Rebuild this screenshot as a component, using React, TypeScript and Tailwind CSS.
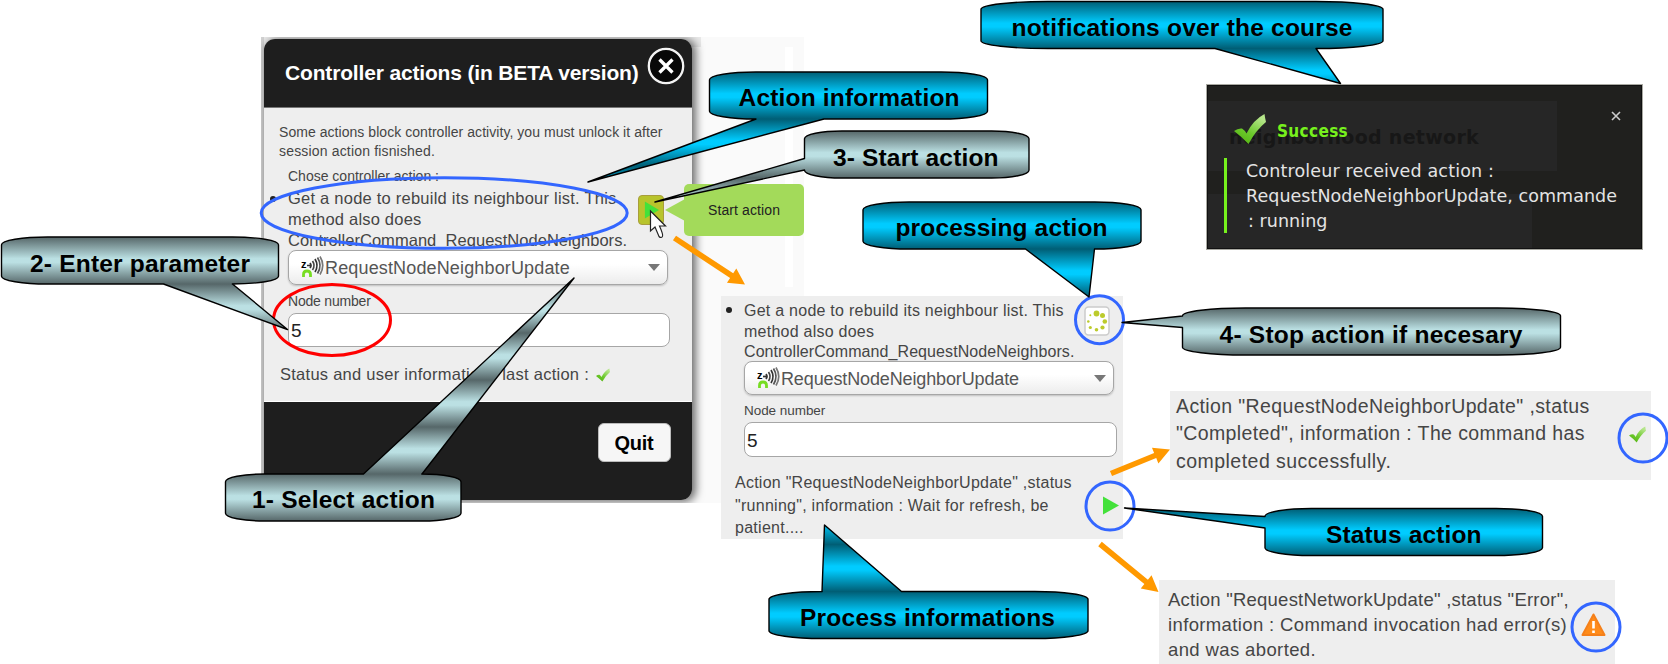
import type { ReactNode } from "react";

type Tone = "cyan" | "slate";
type Side = "top" | "bottom" | "left";

interface CalloutProps {
  id: string;
  tone: Tone;
  x: number;
  y: number;
  w: number;
  side: Side;
  base: [number, number];
  tip: [number, number];
  text: string;
  textX: number;
  textW: number;
  baseline: number;
}

const H = 47;

const tones: Record<Tone, { edge: string; mid: string }> = {
  cyan: { edge: "#005e75", mid: "#00ccff" },
  slate: { edge: "#566769", mid: "#bbe0e3" },
};

function calloutPath({ x, y, w, side, base, tip }: CalloutProps) {
  const rx = w / 6;
  const ry = 7.8;
  const r = x + w;
  const b = y + H;
  const arc = `A${rx} ${ry} 0 0 1`;
  const t = `L${tip[0]} ${tip[1]}`;
  const top = side === "top" ? `H${base[0]}${t}L${base[1]} ${y}` : "";
  const bottom = side === "bottom" ? `H${base[1]}${t}L${base[0]} ${b}` : "";
  const left = side === "left" ? `V${base[1]}${t}L${x} ${base[0]}` : "";
  return `M${x + rx} ${y}${top}H${r - rx}${arc} ${r} ${y + ry}V${b - ry}${arc} ${r - rx} ${b}${bottom}H${x + rx}${arc} ${x} ${b - ry}${left}V${y + ry}${arc} ${x + rx} ${y}Z`;
}

function Callout(props: CalloutProps) {
  const { id, tone, y, text, textX, textW, baseline } = props;
  const { edge, mid } = tones[tone];
  return (
    <g>
      <linearGradient id={id} gradientUnits="userSpaceOnUse" x1="0" y1={y} x2="0" y2={y + H} spreadMethod="repeat">
        <stop offset="0" stopColor={edge} />
        <stop offset="0.46" stopColor={mid} />
        <stop offset="0.54" stopColor={mid} />
        <stop offset="1" stopColor={edge} />
      </linearGradient>
      <path d={calloutPath(props)} fill={`url(#${id})`} stroke="#000" strokeWidth="1.4" strokeLinejoin="round" />
      <text x={textX} y={baseline} textLength={textW} className="fill-black text-[24.5px] font-bold">
        {text}
      </text>
    </g>
  );
}

const callouts: CalloutProps[] = [
  { id: "notif", tone: "cyan", x: 981, y: 1.5, w: 402, side: "bottom", base: [1215, 1316], tip: [1340.5, 83.5], text: "notifications over the course", textX: 1011.5, textW: 341, baseline: 35.5 },
  { id: "info", tone: "cyan", x: 709.5, y: 72, w: 278, side: "bottom", base: [756, 824], tip: [588, 182], text: "Action information", textX: 738.5, textW: 221, baseline: 105.5 },
  { id: "start", tone: "slate", x: 804.5, y: 131, w: 224.5, side: "left", base: [158.5, 170], tip: [655, 202], text: "3- Start action", textX: 833, textW: 165.5, baseline: 165.5 },
  { id: "proc", tone: "cyan", x: 863, y: 202, w: 278, side: "bottom", base: [1025.5, 1094.5], tip: [1089, 297], text: "processing action", textX: 895.5, textW: 212, baseline: 235.5 },
  { id: "enter", tone: "slate", x: 1.5, y: 237, w: 277, side: "bottom", base: [163.5, 232.5], tip: [287.5, 329.5], text: "2- Enter parameter", textX: 30, textW: 220, baseline: 271.5 },
  { id: "select", tone: "slate", x: 225.5, y: 474, w: 235.5, side: "top", base: [363.5, 422], tip: [574, 278], text: "1- Select action", textX: 252, textW: 183, baseline: 507.5 },
  { id: "stop", tone: "slate", x: 1182.5, y: 308, w: 378, side: "left", base: [316, 327.5], tip: [1122, 322.5], text: "4- Stop action if necesary", textX: 1219.5, textW: 303, baseline: 342.5 },
  { id: "status", tone: "cyan", x: 1265, y: 508.5, w: 277.5, side: "left", base: [516.5, 528], tip: [1124.5, 508], text: "Status action", textX: 1326, textW: 155.5, baseline: 542.5 },
  { id: "process", tone: "cyan", x: 769, y: 591.5, w: 319, side: "top", base: [822, 901.5], tip: [824.5, 525], text: "Process informations", textX: 800, textW: 255, baseline: 625.5 },
];

function Arrow({ from, to }: { from: [number, number]; to: [number, number] }) {
  const dx = to[0] - from[0];
  const dy = to[1] - from[1];
  const len = Math.hypot(dx, dy);
  const deg = (Math.atan2(dy, dx) * 180) / Math.PI;
  return (
    <g transform={`translate(${from[0]} ${from[1]}) rotate(${deg})`} fill="#ff9900">
      <path d={`M0 -2.8H${len - 16}V-8.5L${len} 0L${len - 16} 8.5V2.8H0Z`} />
    </g>
  );
}

function Annotations() {
  return (
    <svg className="absolute inset-0" width="1668" height="664" viewBox="0 0 1668 664">
      <g fill="none" stroke="#3366ff" strokeWidth="3">
        <ellipse cx="444.2" cy="213" rx="183" ry="35.3" />
        <circle cx="1099.5" cy="319.7" r="24" />
        <circle cx="1110" cy="506" r="24" />
        <circle cx="1643" cy="438" r="24" />
        <circle cx="1596" cy="627" r="24" />
        <ellipse cx="332" cy="320" rx="58.5" ry="35.5" stroke="#ff0000" />
      </g>
      <Arrow from={[674.5, 238]} to={[745, 284.5]} />
      <Arrow from={[1111, 473.5]} to={[1170, 449.5]} />
      <Arrow from={[1100, 544]} to={[1158.5, 592]} />
      {callouts.map((c) => (
        <Callout key={c.id} {...c} />
      ))}
      <path d="M650.500 211V231L655 227L659 236.500Q661 238.500 662.500 236.500Q663.500 235 659.500 226H665.500Z" fill="#fff" stroke="#222" strokeWidth="1.2" />
    </svg>
  );
}

function CheckIcon({ size, id }: { size: number; id: string }) {
  return (
    <svg width={size} height={size} viewBox="0 0 32 32" className="shrink-0">
      <linearGradient id={id} x1="0" y1="1" x2="0.6" y2="0">
        <stop offset="0" stopColor="#4fae0c" />
        <stop offset="0.5" stopColor="#6cc92c" />
        <stop offset="1" stopColor="#b5e58a" />
      </linearGradient>
      <path d="M0 18Q4 15 8 15.500Q10.500 17 12.500 20.500Q19 7 30.500 1Q31 5 32 9Q22 17 14.500 31Q8 24 0 18Z" fill={`url(#${id})`} />
    </svg>
  );
}

function ZwaveIcon() {
  return (
    <svg width="24" height="24" viewBox="0 0 24 24" className="shrink-0">
      <text x="0" y="13" className="fill-black text-[11px] font-bold">z</text>
      <g fill="none" stroke="#333" strokeWidth="1.700">
        <path d="M6 10.500H9" />
        <path d="M9 8Q11 10.500 9 13" />
        <path d="M11.500 6Q14.500 10.500 11.500 15" stroke="#444" />
        <path d="M14 4Q18 10.500 14 17" />
        <path d="M16.500 2.500Q21.500 10.500 16.500 18.500" stroke="#555" />
        <path d="M19 1.500Q24.500 10.500 19 19.500" stroke="#777" />
      </g>
      <path d="M2.500 22V19.500Q2.500 16 6 16T9.500 19.500V22" fill="none" stroke="#77dd22" strokeWidth="2.800" />
    </svg>
  );
}

function Play({ className }: { className: string }) {
  return (
    <svg className={className} viewBox="0 0 17 19" preserveAspectRatio="none">
      <path d="M1 0.500L17 9.500L1 18.500Z" fill="#43e13a" />
    </svg>
  );
}

function Select({ width, height, text }: { width: string; height: string; text: string }) {
  return (
    <div className={`flex items-center rounded-lg border border-[#a6a6a6] bg-linear-to-b from-white from-40% to-[#ececec] pr-[7px] pl-[12px] shadow-[0_1px_2px_#0003] ${width} ${height}`}>
      <ZwaveIcon />
      <span className={`flex-1 pt-px text-[18px] leading-none text-[#555] ${text}`}>RequestNodeNeighborUpdate</span>
      <svg width="12" height="7" viewBox="0 0 12 7">
        <path d="M0 0H12L6 7Z" fill="#777" />
      </svg>
    </div>
  );
}

function Field({ width }: { width: string }) {
  return (
    <div className={`flex h-[34.5px] items-center rounded-lg border-[1.5px] border-[#a6a6a6] bg-white pt-[2px] pl-[2px] text-[19px] leading-none text-[#222] ${width}`}>5</div>
  );
}

function Line({ className = "", children }: { className?: string; children: ReactNode }) {
  return <div className={`whitespace-nowrap ${className}`}>{children}</div>;
}

function ControllerDialog() {
  return (
    <section className="absolute top-[39px] left-[264px] flex h-[461px] w-[428px] flex-col overflow-hidden rounded-[11px] bg-[#1e1e1e]">
      <header className="flex h-[69px] items-start justify-between border-b border-[#777] pt-[21px] pr-[7px] pl-[21px]">
        <h1 className="text-[21px] leading-[26px] font-bold tracking-[-0.16px] whitespace-nowrap text-white">Controller actions (in BETA version)</h1>
        <svg width="38" height="38" viewBox="0 0 38 38" className="-mt-[13.5px]">
          <circle cx="19" cy="19" r="17.200" fill="#080808" stroke="#f4f4f4" strokeWidth="2.300" />
          <path d="M12.500 12.500L25.500 25.500M25.500 12.500L12.500 25.500" stroke="#fff" strokeWidth="3.300" />
        </svg>
      </header>
      <div className="flex h-[294px] flex-col border-b border-white bg-[#eeeeee] pt-[15px] pl-[15px] text-[#454545]">
        <div className="text-[14px] leading-[18.5px]">
          <Line className="tracking-[0.05px]">Some actions block controller activity, you must unlock it after</Line>
          <Line className="tracking-[0.17px]">session action fisnished.</Line>
        </div>
        <div className="pl-[9px]">
          <Line className="mt-[7px] text-[14px] leading-[18px]">Chose controller action :</Line>
          <div className="relative mt-[3px] text-[16.5px] leading-[21px]">
            <span className="absolute top-[8px] -left-[18px] size-[6px] rounded-full bg-[#222]" />
            <Line className="tracking-[0.23px]">Get a node to rebuild its neighbour list. This</Line>
            <Line className="tracking-[0.2px]">method also does</Line>
            <Line className="tracking-[0.04px]">ControllerCommand_RequestNodeNeighbors.</Line>
          </div>
          <div className="-mt-px">
            <Select width="w-[380px]" height="h-[34.5px]" text="tracking-[0.15px]" />
          </div>
          <Line className="mt-[7px] text-[14px] leading-[18px] tracking-[-0.2px]">Node number</Line>
          <div className="mt-[3px]">
            <Field width="w-[382px]" />
          </div>
        </div>
        <div className="mt-[17px] flex items-center text-[16.5px] leading-[21px]">
          <Line className="w-[317px] pl-px tracking-[0.26px]">Status and user informations last action :</Line>
          <CheckIcon size={14} id="check-dialog" />
        </div>
      </div>
      <footer className="flex justify-end pt-[21px] pr-[21.5px]">
        <button className="h-[39px] w-[73px] rounded-md border border-[#bbb] bg-[#f6f6f6] text-[20px] font-bold tracking-[-0.2px] text-black">Quit</button>
      </footer>
    </section>
  );
}

function StartButton() {
  return (
    <div className="absolute top-[195px] left-[638px] flex items-center">
      <div className="flex h-[30px] w-[26px] items-center justify-center rounded border border-[#a89e3c] bg-[#b8c42c]">
        <Play className="h-[18px] w-[15px]" />
      </div>
      <svg width="20" height="26" viewBox="0 0 20 26" className="ml-px">
        <path d="M0 13L20 2V24Z" fill="#a3da5a" />
      </svg>
      <div className="-my-3 -ml-px flex h-[52px] w-[120px] items-center rounded-[5px] bg-[#a3da5a] pl-[24px] text-[14px] tracking-[0.1px] whitespace-nowrap text-[#222]">Start action</div>
    </div>
  );
}

const spinnerDots = [
  [12.5, 7.5, 2.9],
  [18.5, 9.5, 2.5],
  [20.8, 15.5, 2.3],
  [18.5, 21.5, 2.1],
  [12.5, 23.8, 1.8],
  [6.3, 21.5, 1.6],
  [4.3, 15.5, 1.3],
  [6.3, 9.3, 1],
];

function ProcessPanel() {
  return (
    <section className="absolute top-[296px] left-[721px] flex h-[243px] w-[402px] flex-col bg-[#eeeeee] pt-[5px] text-[16px] text-[#454545]">
      <div className="flex h-[60px] justify-between pr-[13px] pl-[23px]">
        <div className="relative leading-[20.5px]">
          <span className="absolute top-[6px] -left-[18px] size-[6px] rounded-full bg-[#222]" />
          <Line className="tracking-[0.25px]">Get a node to rebuild its neighbour list. This</Line>
          <Line className="tracking-[0.24px]">method also does</Line>
          <Line className="tracking-[0.08px]">ControllerCommand_RequestNodeNeighbors.</Line>
        </div>
        <svg width="26" height="30" viewBox="0 0 26 30" className="mt-[5px]">
          <rect x="1" y="1" width="24" height="28" rx="3.500" fill="#fff" stroke="#ccc" strokeWidth="1.500" />
          {spinnerDots.map(([cx, cy, r]) => (
            <circle key={`${cx}-${cy}`} cx={cx} cy={cy} r={r} fill="#bccb2c" />
          ))}
        </svg>
      </div>
      <div className="pl-[23px]">
        <Select width="w-[370px]" height="h-[34px]" text="tracking-[-0.13px]" />
        <Line className="mt-[7px] text-[13.5px] leading-[18px] tracking-[-0.05px]">Node number</Line>
        <div className="mt-[2px]">
          <Field width="w-[373px]" />
        </div>
      </div>
      <div className="mt-[15.5px] flex justify-between pr-[4px] pl-[14px] leading-[22.5px]">
        <div>
          <Line className="tracking-[0.25px]">Action "RequestNodeNeighborUpdate" ,status</Line>
          <Line className="tracking-[0.27px]">"running", information : Wait for refresh, be</Line>
          <Line className="tracking-[0.27px]">patient....</Line>
        </div>
        <Play className="mt-[23.5px] h-[19px] w-[17px]" />
      </div>
    </section>
  );
}

function CompletedPanel() {
  return (
    <section className="absolute top-[391px] left-[1170px] flex h-[89px] w-[481px] justify-between bg-[#eeeeee] pt-[1.5px] pr-[5px] pl-[6px] text-[19.5px] leading-[27.6px] text-[#454545]">
      <div>
        <Line className="tracking-[0.38px]">Action "RequestNodeNeighborUpdate" ,status</Line>
        <Line className="tracking-[0.38px]">"Completed", information : The command has</Line>
        <Line className="tracking-[0.47px]">completed successfully.</Line>
      </div>
      <div className="pt-[33px]">
        <CheckIcon size={17} id="check-completed" />
      </div>
    </section>
  );
}

function ErrorPanel() {
  return (
    <section className="absolute top-[580px] left-[1159px] flex h-[84px] w-[456px] justify-between bg-[#eeeeee] pt-[7px] pr-[9.5px] pl-[9px] text-[18.5px] leading-[25px] text-[#454545]">
      <div>
        <Line className="tracking-[0.23px]">Action "RequestNetworkUpdate" ,status "Error",</Line>
        <Line className="tracking-[0.37px]">information : Command invocation had error(s)</Line>
        <Line className="tracking-[0.38px]">and was aborted.</Line>
      </div>
      <svg width="25" height="24" viewBox="0 0 25 24" className="mt-[25.5px] shrink-0">
        <path d="M12.500 1.500L23.500 22H1.500Z" fill="#ff8c1a" stroke="#f5801a" strokeWidth="2" strokeLinejoin="round" />
        <path d="M12.500 8V15.500M12.500 17.500V20" stroke="#fff" strokeWidth="2.600" />
      </svg>
    </section>
  );
}

function Notification() {
  return (
    <section className="absolute top-[84px] left-[1206px] h-[166px] w-[437px] border border-[#a9a9a2] bg-[#262626] font-['DejaVu_Sans',sans-serif]">
      <div className="absolute inset-x-0 top-0 h-[16px] bg-[#20201e]" />
      <div className="absolute top-0 right-0 h-[164px] w-[85px] bg-[#20201e]" />
      <div className="absolute top-[86px] left-0 h-[23px] w-[351px] bg-[#20201e]" />
      <div className="absolute right-[85px] bottom-0 h-[55px] w-[25px] bg-[#20201e]" />
      <span className="absolute top-[38px] left-[22px] text-[19px] leading-[28px] font-bold tracking-[0.3px] whitespace-nowrap text-[#171717]">neighborhood network</span>
      <div className="relative flex h-full flex-col border border-[#111] pt-[25px] pl-[16px]">
        <div className="flex h-[47px] items-start pl-[10px]">
          <div className="pt-[2px]">
            <CheckIcon size={32} id="check-notification" />
          </div>
          <h2 className="ml-[11px] flex-1 pt-[8px] font-['DejaVu_Sans_Condensed','DejaVu_Sans',sans-serif] text-[17px] leading-[24px] font-bold tracking-[0.35px] text-[#77f11d]">Success</h2>
          <svg width="10" height="10" viewBox="0 0 10 10" className="mr-[20.5px]">
            <path d="M1 1L9 9M9 1L1 9" stroke="#ccc" strokeWidth="1.600" />
          </svg>
        </div>
        <div className="h-[75px] border-l-[3px] border-[#77f11d] pt-px pl-[19px] text-[17.5px] leading-[25px] text-[#e4e4e4]">
          <Line className="tracking-[0.15px]">Controleur received action :</Line>
          <Line className="tracking-[0.05px]">RequestNodeNeighborUpdate, commande</Line>
          <Line className="pl-[2px] tracking-[0.05px]">: running</Line>
        </div>
      </div>
    </section>
  );
}

export default function App() {
  return (
    <main className="relative h-[664px] w-[1668px] overflow-hidden bg-white font-['Liberation_Sans',Arial,sans-serif]">
      <div className="absolute top-[37px] left-[261px] h-[466px] w-[543px] overflow-hidden bg-[#fafafa]">
        <div className="h-[10px] w-[440px] bg-[#e9e9e9]" />
        <div className="absolute top-0 left-0 h-full w-[3px] bg-[#d2d2d2]" />
        <div className="absolute top-[10px] left-[524px] h-[240px] w-[8px] bg-white" />
        <div className="absolute top-[2px] left-[3px] h-[461px] w-[428px] rounded-[11px] shadow-[3px_1px_9px_1px_#00000090]" />
      </div>
      <ControllerDialog />
      <StartButton />
      <ProcessPanel />
      <CompletedPanel />
      <ErrorPanel />
      <Notification />
      <Annotations />
    </main>
  );
}
